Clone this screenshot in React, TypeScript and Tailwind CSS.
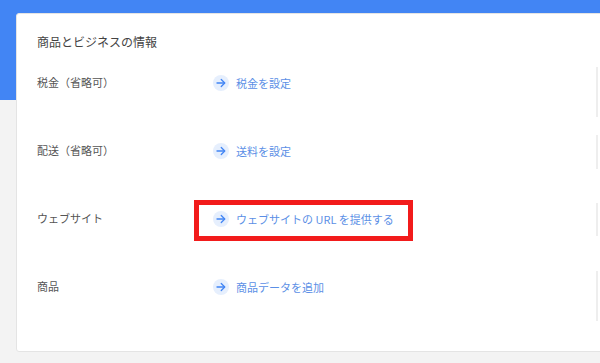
import React from 'react';

interface Row {
  label: string;
  action: string;
  lineHeight: string;
  highlight?: boolean;
}

const rows: Row[] = [
  { label: '税金（省略可）', action: '税金を設定', lineHeight: 'h-[50px]' },
  { label: '配送（省略可）', action: '送料を設定', lineHeight: 'h-[34px]' },
  { label: 'ウェブサイト', action: 'ウェブサイトの URL を提供する', lineHeight: 'h-[33px]', highlight: true },
  { label: '商品', action: '商品データを追加', lineHeight: 'h-[50px]' },
];

const ArrowIcon = () => (
  <span className="flex h-[16px] w-[16px] shrink-0 items-center justify-center rounded-full bg-[#e6effd]">
    <svg width="12" height="12" viewBox="0 0 24 24" fill="none" stroke="#4285f4" strokeWidth={2.6} strokeLinecap="round" strokeLinejoin="round">
      <path d="M4 12h15" />
      <path d="M12.5 5l7 7-7 7" />
    </svg>
  </span>
);

export default function App() {
  return (
    <div
      className="h-[363px] w-[600px] overflow-hidden bg-[#f3f3f3]"
      style={{ fontFamily: '"Noto Sans CJK JP", "Noto Sans", sans-serif' }}
    >
      <div className="h-[100px] bg-[#4285f4]" />
      <div className="relative -mt-[87px] ml-[16px] h-[339px] w-[600px] rounded-[3px] border border-[#e4e4e4] bg-white pl-[20px] pt-[21px]">
        {/* 見出し */}
        <div className="h-[14px] text-[12px] leading-[14px] text-[#444]">商品とビジネスの情報</div>

        <div className="-mt-[1px]">
          {rows.map((row) => (
            <div key={row.label} className="flex h-[68px] items-center">
              <div className="w-[176px] shrink-0 text-[11px] leading-[16px] text-[#555]">{row.label}</div>
              <div className="flex-1">
                <div className="relative inline-flex items-center gap-[7px]">
                  <ArrowIcon />
                  <span className="text-[11px] leading-[16px] text-[#5b8fe6]">{row.action}</span>
                  {row.highlight && (
                    <div className="absolute left-[-19px] right-[-19px] top-[-11px] h-[41px] border-[5px] border-[#f21b1b]" />
                  )}
                </div>
              </div>
              {/* 右端の区切り線 */}
              <div className={`mr-[17px] mt-[19px] w-[2px] self-start bg-[#eeeeee] ${row.lineHeight}`} />
            </div>
          ))}
        </div>
      </div>
    </div>
  );
}
